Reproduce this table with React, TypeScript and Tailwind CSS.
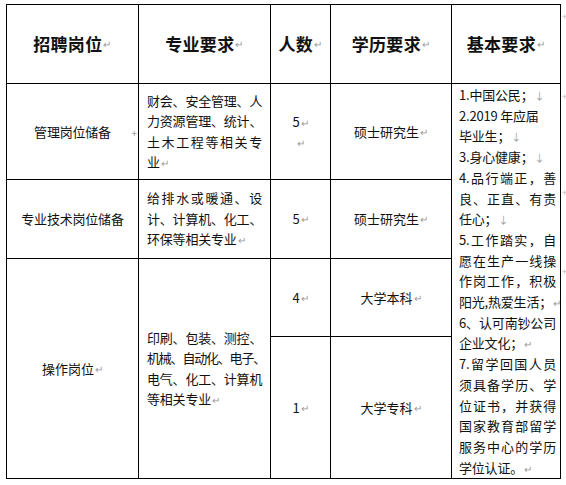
const font = '[font-family:"Noto_Sans_CJK_SC","Noto_Sans",sans-serif]';

function Mark({ c = '↵' }: { c?: string }) {
  return <span className="ml-[1px] text-[10px] leading-none font-normal text-[#9a9a9a]">{c}</span>;
}

// one line of a cell; full lines are spread edge to edge like Word's justified text
function Line({ text, full, mark, tight }: { text: string; full?: boolean; mark?: string; tight?: boolean }) {
  return (
    <div
      className={
        'whitespace-nowrap ' +
        (full ? 'text-justify [text-align-last:justify] ' : 'text-left ') +
        (tight ? 'tracking-[-1.2px]' : 'tracking-[-0.2px]')
      }
    >
      {text}
      {mark && <Mark c={mark} />}
    </div>
  );
}

const cell = 'border-r border-b border-black flex items-center justify-center';
const head = cell + ' border-t text-[17px] font-bold tracking-[0.3px]';

const basic: { t: string; m?: string }[] = [
  { t: '1.中国公民；', m: '↓' },
  { t: '2.2019 年应届' },
  { t: '毕业生；', m: '↓' },
  { t: '3.身心健康；', m: '↓' },
  { t: '4.品行端正，善' },
  { t: '良、正直、有责' },
  { t: '任心；', m: '↓' },
  { t: '5.工作踏实，自' },
  { t: '愿在生产一线操' },
  { t: '作岗工作，积极' },
  { t: '阳光,热爱生活；', m: '↵' },
  { t: '6、认可南钞公司' },
  { t: '企业文化；', m: '↵' },
  { t: '7.留学回国人员' },
  { t: '须具备学历、学' },
  { t: '位证书，并获得' },
  { t: '国家教育部留学' },
  { t: '服务中心的学历' },
  { t: '学位认证。', m: '↵' },
];

function EndMark() {
  return <div className="pl-[1px] pt-[8px] text-[9px] leading-none text-[#b5b5b5]">+</div>;
}

export default function App() {
  return (
    <div className={'min-h-[485px] w-[566px] bg-white text-[#111] ' + font}>
      <div className="ml-[6px] pt-[4px]">
        <div className="grid grid-cols-[133px_132px_60px_121px_109px_5px] grid-rows-[80px_96px_79px_78px_142px] text-[13px]">
          {/* header */}
          <div className={head + ' col-start-1 row-start-1 border-l'}>
            招聘岗位<Mark />
          </div>
          <div className={head + ' col-start-2 row-start-1'}>
            专业要求<Mark />
          </div>
          <div className={head + ' col-start-3 row-start-1'}>
            人数<Mark />
          </div>
          <div className={head + ' col-start-4 row-start-1'}>
            学历要求<Mark />
          </div>
          <div className={head + ' col-start-5 row-start-1'}>
            基本要求<Mark />
          </div>
          <div className="col-start-6 row-start-1">
            <EndMark />
          </div>

          {/* 管理岗位储备 */}
          <div className={cell + ' relative col-start-1 row-start-2 border-l'}>
            <span className="tracking-[-0.2px]">管理岗位储备</span>
            <span className="absolute right-[1px] top-[44px] text-[10px] leading-none text-[#9a9a9a]">+</span>
          </div>
          <div className={cell + ' col-start-2 row-start-2 px-[8px]'}>
            <div className="w-full leading-[20.5px]">
              <Line text="财会、安全管理、人" full />
              <Line text="力资源管理、统计、" full />
              <Line text="土木工程等相关专" full />
              <Line text="业" mark="↵" />
            </div>
          </div>
          <div className={cell + ' col-start-3 row-start-2'}>
            <div className="text-center leading-[20px]">
              <div>
                5<Mark />
              </div>
              <div>
                <Mark />
              </div>
            </div>
          </div>
          <div className={cell + ' col-start-4 row-start-2'}>
            硕士研究生<Mark />
          </div>

          {/* 基本要求 spans all body rows */}
          <div className="col-start-5 row-start-2 row-span-4 border-r border-b border-black pl-[7px] pr-[4px] pt-[1px] leading-[20.7px]">
            {basic.map((b, i) => (
              <Line key={i} text={b.t} full={!b.m && i !== 1} mark={b.m} />
            ))}
          </div>
          <div className="col-start-6 row-start-2">
            <EndMark />
          </div>

          {/* 专业技术岗位储备 */}
          <div className={cell + ' col-start-1 row-start-3 border-l'}>
            <span className="tracking-[-0.2px]">专业技术岗位储备</span>
          </div>
          <div className={cell + ' col-start-2 row-start-3 px-[8px]'}>
            <div className="w-full leading-[20.5px]">
              <Line text="给排水或暖通、设" full />
              <Line text="计、计算机、化工、" full />
              <Line text="环保等相关专业" mark="↵" />
            </div>
          </div>
          <div className={cell + ' col-start-3 row-start-3'}>
            5<Mark />
          </div>
          <div className={cell + ' col-start-4 row-start-3'}>
            硕士研究生<Mark />
          </div>
          <div className="col-start-6 row-start-3">
            <EndMark />
          </div>

          {/* 操作岗位 */}
          <div className={cell + ' col-start-1 row-start-4 row-span-2 border-l'}>
            操作岗位<Mark />
          </div>
          <div className={cell + ' col-start-2 row-start-4 row-span-2 px-[8px]'}>
            <div className="w-full leading-[20.3px]">
              <Line text="印刷、包装、测控、" full />
              <Line text="机械、自动化、电子、" full tight />
              <Line text="电气、化工、计算机" full />
              <Line text="等相关专业" mark="↵" />
            </div>
          </div>
          <div className={cell + ' col-start-3 row-start-4'}>
            4<Mark />
          </div>
          <div className={cell + ' col-start-4 row-start-4'}>
            大学本科<Mark />
          </div>
          <div className="col-start-6 row-start-4">
            <EndMark />
          </div>
          <div className={cell + ' col-start-3 row-start-5'}>
            1<Mark />
          </div>
          <div className={cell + ' col-start-4 row-start-5'}>
            大学专科<Mark />
          </div>
        </div>
      </div>
    </div>
  );
}
